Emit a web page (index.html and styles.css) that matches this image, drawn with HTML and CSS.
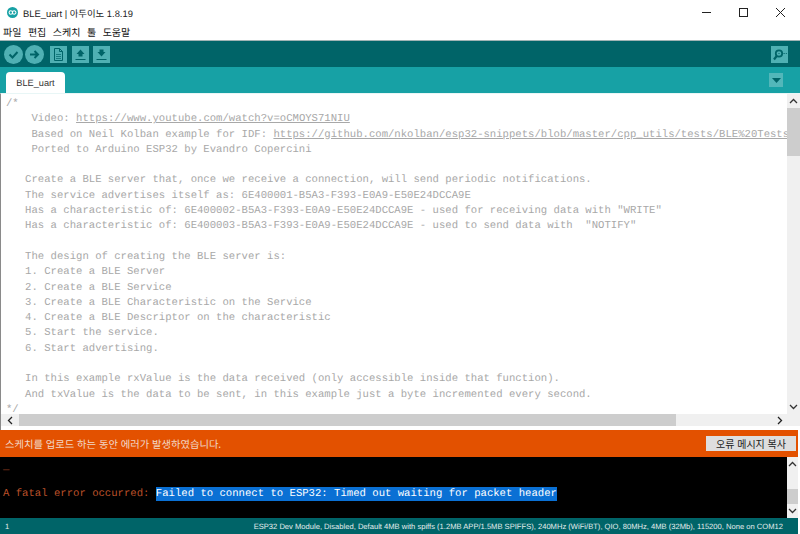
FILE: index.html
```html
<!DOCTYPE html>
<html lang="ko">
<head>
<meta charset="utf-8">
<title>BLE_uart | 아두이노 1.8.19</title>
<link rel="stylesheet" href="styles.css">
</head>
<body>
<div class="window">
  <header class="titlebar">
    <svg class="app-icon" width="11" height="11" viewBox="0 0 16 16"><circle cx="8" cy="8" r="8" fill="#17a1a5"/><path d="M3 8a2.300 2.300 0 0 1 5 0a2.300 2.300 0 0 0 5 0a2.300 2.300 0 0 0-5 0a2.300 2.300 0 0 1-5 0z" fill="none" stroke="#fff" stroke-width="1.500"/></svg>
    <span class="title">BLE_uart | 아두이노 1.8.19</span>
    <div class="winbtns">
      <svg width="37" height="24" viewBox="0 0 37 24"><path d="M14 12.500h9" stroke="#222" fill="none"/></svg>
      <svg width="37" height="24" viewBox="0 0 37 24"><rect x="14.500" y="8.500" width="8" height="8" stroke="#222" fill="none"/></svg>
      <svg width="37" height="24" viewBox="0 0 37 24"><path d="M14 8l9 9M23 8l-9 9" stroke="#222" fill="none"/></svg>
    </div>
  </header>
  <nav class="menubar"><span>파일</span><span>편집</span><span>스케치</span><span>툴</span><span>도움말</span></nav>
  <div class="toolbar">
    <span class="round"><svg width="19" height="19" viewBox="0 0 19 19"><path d="M5.500 9.500l3 3 5-5.500" fill="none" stroke="#006468" stroke-width="2"/></svg></span>
    <span class="round"><svg width="19" height="19" viewBox="0 0 19 19"><path d="M5 9.500h8M9.500 6l3.500 3.500-3.500 3.500" fill="none" stroke="#006468" stroke-width="2"/></svg></span>
    <span class="square first"><svg width="17" height="17" viewBox="0 0 17 17"><path d="M4.500 2.500h5l3 3v9h-8z" fill="none" stroke="#006468"/><path d="M9.500 2.500v3h3" fill="none" stroke="#006468"/><path d="M6 8.500h5M6 10.500h5M6 12.500h5" stroke="#006468" stroke-width=".7"/></svg></span>
    <span class="square"><svg width="17" height="17" viewBox="0 0 17 17"><path d="M8.500 3.500l4 4.500H10.500v2.500h-4V8H4.500z" fill="#006468"/><path d="M3.500 13.500h10" stroke="#006468"/></svg></span>
    <span class="square"><svg width="17" height="17" viewBox="0 0 17 17"><path d="M6.500 3.500h4V6h2l-4 4.500L4.500 6h2z" fill="#006468"/><path d="M3.500 13.500h10" stroke="#006468"/></svg></span>
    <span class="square serial"><svg width="17" height="17" viewBox="0 0 17 17"><circle cx="8" cy="7.500" r="3.200" fill="none" stroke="#006468" stroke-width="1.800"/><path d="M5.700 10l-2.700 3.500" stroke="#006468" stroke-width="2.200"/><path d="M7.500 7.500h1M12.500 7.500h1.200M14.800 7.500h1" stroke="#006468"/></svg></span>
  </div>
  <div class="tabbar">
    <div class="tab">BLE_uart</div>
    <span class="tabmenu"><svg width="9" height="5" viewBox="0 0 9 5"><path d="M0 0h9L4.500 5z" fill="#006468"/></svg></span>
  </div>
  <section class="editor">
    <div class="editor-main">
<pre class="code">/*
    Video: <u>https://www.youtube.com/watch?v=oCMOYS71NIU</u>
    Based on Neil Kolban example for IDF: <u>https://github.com/nkolban/esp32-snippets/blob/master/cpp_utils/tests/BLE%20Tests</u>
    Ported to Arduino ESP32 by Evandro Copercini

   Create a BLE server that, once we receive a connection, will send periodic notifications.
   The service advertises itself as: 6E400001-B5A3-F393-E0A9-E50E24DCCA9E
   Has a characteristic of: 6E400002-B5A3-F393-E0A9-E50E24DCCA9E - used for receiving data with "WRITE"
   Has a characteristic of: 6E400003-B5A3-F393-E0A9-E50E24DCCA9E - used to send data with  "NOTIFY"

   The design of creating the BLE server is:
   1. Create a BLE Server
   2. Create a BLE Service
   3. Create a BLE Characteristic on the Service
   4. Create a BLE Descriptor on the characteristic
   5. Start the service.
   6. Start advertising.

   In this example rxValue is the data received (only accessible inside that function).
   And txValue is the data to be sent, in this example just a byte incremented every second.
*/</pre>
      <div class="vscroll">
        <span class="arrow"><svg width="9" height="6" viewBox="0 0 9 6"><path d="M1 5l3.500-3.500L8 5" fill="none" stroke="#333" stroke-width="1.300"/></svg></span>
        <span class="vthumb"></span>
        <span class="vrest"></span>
        <span class="arrow"><svg width="9" height="6" viewBox="0 0 9 6"><path d="M1 1l3.500 3.500L8 1" fill="none" stroke="#333" stroke-width="1.300"/></svg></span>
      </div>
    </div>
    <div class="hscroll">
      <span class="harrow"><svg width="6" height="9" viewBox="0 0 6 9"><path d="M5 1L1.500 4.500 5 8" fill="none" stroke="#222" stroke-width="1.300"/></svg></span>
      <span class="hthumb"></span>
      <span class="hrest"></span>
      <span class="harrow"><svg width="6" height="9" viewBox="0 0 6 9"><path d="M1 1l3.500 3.500L1 8" fill="none" stroke="#222" stroke-width="1.300"/></svg></span>
      <span class="corner"></span>
    </div>
  </section>
  <div class="notice">
    <span>스케치를 업로드 하는 동안 에러가 발생하였습니다.</span>
    <button class="copy">오류 메시지 복사</button>
  </div>
  <section class="console">
<pre class="log"><span class="dash">_</span>A fatal error occurred: <mark>Failed to connect to ESP32: Timed out waiting for packet header</mark></pre>
    <div class="vscroll small">
      <span class="arrow"><svg width="9" height="6" viewBox="0 0 9 6"><path d="M1 5l3.500-3.500L8 5" fill="none" stroke="#333" stroke-width="1.300"/></svg></span>
      <span class="vgap"></span>
      <span class="cthumb"></span>
      <span class="arrow"><svg width="9" height="6" viewBox="0 0 9 6"><path d="M1 1l3.500 3.500L8 1" fill="none" stroke="#333" stroke-width="1.300"/></svg></span>
    </div>
  </section>
  <footer class="status"><span>1</span><span>ESP32 Dev Module, Disabled, Default 4MB with spiffs (1.2MB APP/1.5MB SPIFFS), 240MHz (WiFi/BT), QIO, 80MHz, 4MB (32Mb), 115200, None on COM12</span></footer>
</div>
</body>
</html>
```

FILE: styles.css
```css
* { box-sizing: border-box; }
html, body { margin: 0; padding: 0; }
body { width: 800px; height: 534px; overflow: hidden; background: #fff; font-family: "Noto Sans CJK KR", "Liberation Sans", sans-serif; text-rendering: geometricPrecision; }
.window { display: flex; flex-direction: column; width: 800px; height: 534px; }

.titlebar { flex: 0 0 24px; display: flex; align-items: center; padding-left: 7px; background: #fff; }
.app-icon { flex: none; }
.title { margin: 3px 0 0 5px; font: 9.400px/21px "Liberation Sans", "Noto Sans CJK KR", sans-serif; color: #222; }
.winbtns { margin-left: auto; display: flex; margin-right: 1px; }
.menubar { flex: 0 0 16px; display: flex; gap: 6.500px; padding-left: 3px; font: 10px/16px "Noto Sans CJK KR", sans-serif; color: #111; background: #fff; }

.toolbar { flex: 0 0 27px; display: flex; align-items: center; gap: 2px; padding: 1px 12px 0 4px; background: #006468; border-top: 1px solid #a0b4b5; }
.round { width: 19px; height: 19px; border-radius: 50%; background: #4fb0b3; display: flex; }
.square { width: 17px; height: 17px; margin-left: 2.500px; background: #4fb0b3; display: flex; }
.square.first { margin-left: 4px; }
.square.serial { margin-left: auto; }

.tabbar { flex: 0 0 26px; display: flex; align-items: flex-end; padding-left: 6px; padding-right: 17px; background: #17a1a5; }
.tab { width: 59px; height: 21px; padding-top: 2px; background: #fff; border-radius: 4px 4px 0 0; font: 9.200px/19px "Liberation Sans", sans-serif; color: #333; text-align: center; }
.tabmenu { margin-left: auto; align-self: center; width: 14px; height: 14px; background: #52b7ba; display: flex; align-items: center; justify-content: center; }
.tabmenu svg { display: block; }

.editor { flex: 0 0 337px; min-height: 0; display: flex; flex-direction: column; background: #fff; border-left: 1px solid #8a8a8a; border-top: 1px solid #e8f6f6; }
.editor-main { flex: 1; display: flex; min-height: 0; }
.code { flex: 1; min-width: 0; overflow: hidden; margin: 0 0 -5px; padding: 3px 0 0 5px; font: 10.620px/15.300px "Liberation Mono", monospace; color: #a8a8a8; white-space: pre; }
.code u { text-decoration: underline; }
.vscroll { flex: 0 0 13px; display: flex; flex-direction: column; background: #f0f0f0; }
.arrow { flex: 0 0 14px; display: flex; align-items: center; justify-content: center; }
.vthumb { flex: 0 0 48px; background: #cdcdcd; }
.vrest { flex: 1; }
.hscroll { flex: 0 0 16px; display: flex; align-items: stretch; padding-bottom: 4px; background: #fff; }
.harrow { flex: 0 0 18px; display: flex; align-items: center; justify-content: center; background: #f0f0f0; }
.hthumb { flex: 0 0 657px; background: #cdcdcd; }
.hrest { flex: 1; background: #f0f0f0; }
.corner { flex: 0 0 11px; background: #f0f0f0; }

.notice { flex: 0 0 27px; display: flex; align-items: center; justify-content: space-between; margin-right: 2px; padding: 1px 2px 0 5px; background: #e35100; color: #f1d8c8; font: 10.300px/26px "Noto Sans CJK KR", sans-serif; }
.copy { width: 90px; height: 15px; margin-top: -1px; padding: 0; border: 0; background: #dedede; color: #222; font: 10px/15px "Noto Sans CJK KR", sans-serif; }

.console { flex: 0 0 61px; display: flex; background: #000; margin-right: 2px; }
.log { flex: 1; min-width: 0; margin: 0; padding: 3px 0 0 3px; overflow: hidden; font: 10.620px/14px "Liberation Mono", monospace; color: #bb5129; white-space: pre; }
.log .dash { display: block; height: 27px; line-height: 14px; }
.log mark { display: inline-block; height: 14px; background: #0a70d4; color: #fff; }
.vscroll.small { flex: 0 0 11px; }
.small .arrow { flex: 0 0 14px; }
.vgap { flex: 1; }
.cthumb { flex: 0 0 15px; background: #cdcdcd; }

.status { flex: 0 0 16px; display: flex; justify-content: space-between; padding: 1px 15px 0 5px; margin-right: 2px; background: #006468; color: #e4eded; font: 7.600px/15px "Liberation Sans", sans-serif; }
```
